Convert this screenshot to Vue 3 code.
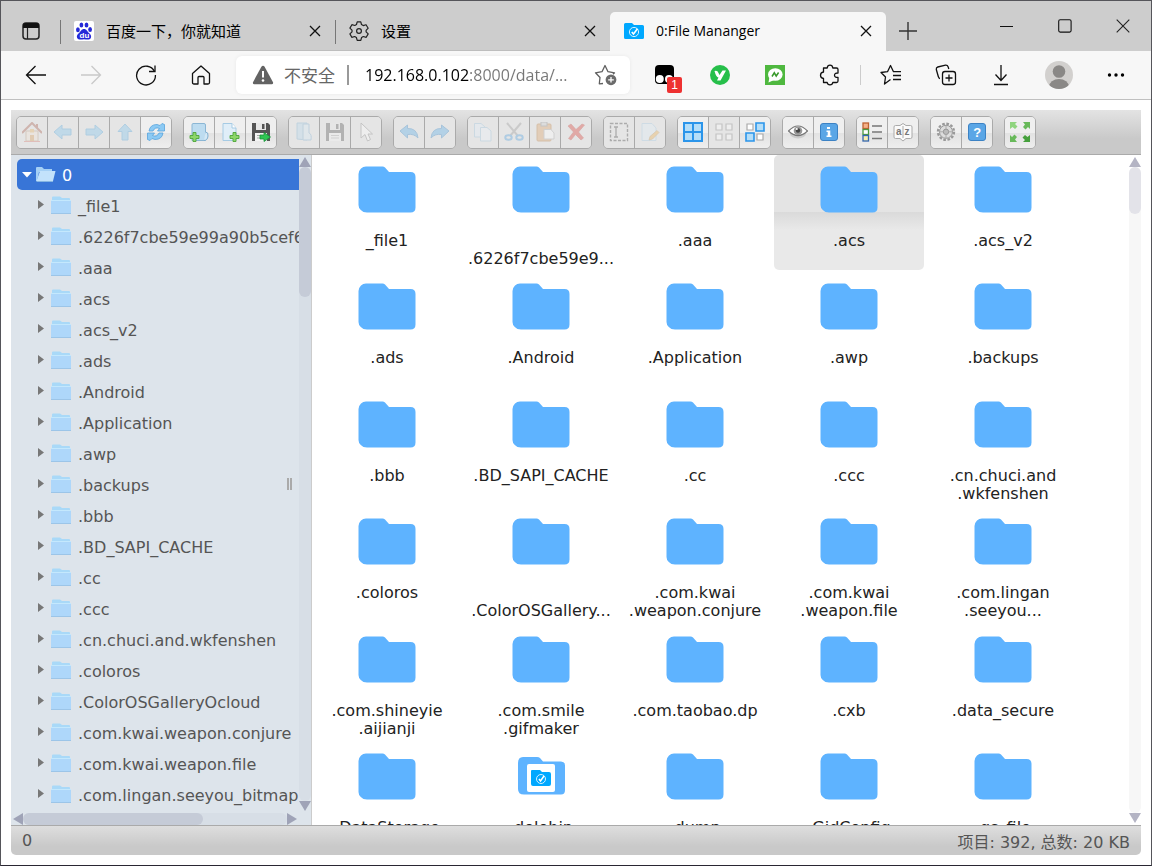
<template>
  <div class="window">
    <!-- Tab bar -->
    <header class="titlebar">
      <button class="tab-actions" aria-label="Tab actions">
        <svg width="20" height="20" viewBox="0 0 20 20" v-html="icons.tabs"></svg>
      </button>
      <div v-for="tab in tabs" :key="tab.title" class="tab" :class="{ active: tab.active }">
        <svg class="favicon" width="20" height="20" viewBox="0 0 20 20" v-html="icons[tab.icon]"></svg>
        <a href="#" class="tab-title">{{ tab.title }}</a>
        <button class="tab-close" aria-label="Close tab">
          <svg width="12" height="12" viewBox="0 0 12 12" v-html="icons.close"></svg>
        </button>
      </div>
      <button class="new-tab" aria-label="New tab">
        <svg width="18" height="18" viewBox="0 0 18 18"><path d="M9 0V18M0 9H18" stroke="#333" stroke-width="1.4" /></svg>
      </button>
      <div class="win-controls">
        <button aria-label="Minimize"><svg width="14" height="14" viewBox="0 0 14 14"><path d="M0 7.5H13" stroke="#111" /></svg></button>
        <button aria-label="Maximize"><svg width="14" height="14" viewBox="0 0 14 14"><rect x=".7" y=".7" width="12.4" height="12.4" rx="1.5" fill="none" stroke="#111" stroke-width="1.1" /></svg></button>
        <button aria-label="Close"><svg width="14" height="14" viewBox="0 0 14 14"><path d="M.7 .7L13.3 13.3M13.3 .7L.7 13.3" stroke="#222" stroke-width="1.1" /></svg></button>
      </div>
    </header>

    <!-- Navigation bar -->
    <div class="navbar">
      <button v-for="b in navButtons" :key="b" class="nav-btn" :aria-label="b" :disabled="b === 'forward'">
        <svg width="22" height="22" viewBox="0 0 22 22" v-html="icons[b]"></svg>
      </button>
      <div class="address">
        <svg width="22" height="20" viewBox="0 0 22 20">
          <path d="M11 .8Q12 .8 12.600 1.800L21 17.200Q21.600 19.200 19.600 19.200H2.400Q.4 19.200 1 17.200L9.400 1.800Q10 .8 11 .8Z" fill="#636363" />
          <path d="M11 6V12.500" stroke="#fff" stroke-width="2" /><circle cx="11" cy="15.500" r="1.300" fill="#fff" />
        </svg>
        <label for="url" class="insecure">不安全</label>
        <span class="bar"></span>
        <input id="url" v-model="url" type="text" class="url" />
        <button class="star" aria-label="Add to favorites">
          <svg width="24" height="22" viewBox="0 0 24 22">
            <path d="M9 19.500L5.300 19.800 6 13.500 1.500 8.800 8 7.700 11 1.500 14 7.700 20.500 8.800 19 10.300" fill="none" stroke="#5f5f5f" stroke-width="1.300" stroke-linejoin="round" />
            <circle cx="17" cy="15.800" r="5.400" fill="#6b6b6b" /><path d="M17 13V18.600M14.200 15.800H19.800" stroke="#fff" stroke-width="1.300" />
          </svg>
        </button>
      </div>
      <div class="extensions">
        <button v-for="b in extButtons" :key="b" class="nav-btn" :aria-label="b">
          <svg width="22" height="22" viewBox="0 0 22 22" v-html="icons[b]"></svg>
          <span v-if="b === 'monkey'" class="badge">1</span>
        </button>
      </div>
      <span class="divider"></span>
      <div class="extensions browser">
        <button v-for="b in browserButtons" :key="b" class="nav-btn" :aria-label="b">
          <svg width="22" height="22" viewBox="0 0 22 22" v-html="icons[b]"></svg>
        </button>
        <button class="nav-btn profile" aria-label="Profile">
          <svg width="28" height="28" viewBox="0 0 28 28">
            <defs><clipPath id="avatar"><circle cx="14" cy="14" r="14" /></clipPath></defs>
            <g clip-path="url(#avatar)"><rect width="28" height="28" fill="#d2d0ce" /><circle cx="14" cy="10.500" r="6.300" fill="#8a8886" /><ellipse cx="14" cy="26" rx="10" ry="8" fill="#8a8886" /></g>
          </svg>
        </button>
        <button class="nav-btn" aria-label="Settings and more">
          <svg width="20" height="20" viewBox="0 0 20 20"><circle cx="3.500" cy="10" r="1.700" /><circle cx="10" cy="10" r="1.700" /><circle cx="16.500" cy="10" r="1.700" /></svg>
        </button>
      </div>
    </div>

    <!-- File manager -->
    <main class="manager">
      <div class="toolbar">
        <div v-for="(set, i) in toolbar" :key="i" class="button-set">
          <button v-for="b in set" :key="b.name" class="tool" :aria-label="b.name" :disabled="b.off">
            <svg width="20" height="20" viewBox="0 0 20 20" v-html="icons[b.name]"></svg>
          </button>
        </div>
      </div>

      <div class="workzone">
        <nav class="tree">
          <div class="tree-view">
            <ul>
              <li>
                <a href="#" class="root">
                  <svg width="10" height="6" viewBox="0 0 10 6"><path d="M0 0H10L5 5.500Z" fill="#fff" /></svg>
                  <svg width="20" height="15" viewBox="0 0 20 15" v-html="icons.opened"></svg>
                  <span>0</span>
                </a>
              </li>
              <li v-for="dir in dirs" :key="dir">
                <a href="#" class="node">
                  <svg width="6" height="11" viewBox="0 0 6 11"><path d="M0 0L6 4.500L0 9Z" fill="#777" /></svg>
                  <svg width="20" height="19" viewBox="0 0 20 19" v-html="icons.dir"></svg>
                  <span>{{ dir }}</span>
                </a>
              </li>
            </ul>
            <div class="scroll vertical">
              <i class="up"></i><span class="track"><b class="nav-thumb"></b></span><i class="down"></i>
            </div>
          </div>
          <div class="scroll horizontal">
            <i class="left"></i><span class="track"><b class="h-thumb"></b></span><i class="right"></i>
          </div>
          <span class="grip"></span>
        </nav>

        <section class="cwd">
          <div class="files">
            <a v-for="file in files" :key="file" href="#" class="file" :class="{ hover: file === '.acs' }">
              <svg width="58" height="47" viewBox="0 0 58 47">
                <g v-if="file === '.dolohin'">
                  <path d="M11 4H25Q27 4 28 5L31 8.500H49Q53 8.500 53 12.500V37Q53 41.500 49 41.500H12Q6 41.500 6 36V10Q6 4 11 4Z" fill="#5eb3ff" />
                  <rect x="15" y="11" width="28" height="28" rx="2" fill="#fff" />
                  <path d="M20 17H28L30 19H37Q39 19 39 21V31Q39 33 37 33H21Q19 33 19 31V18Q19 17 20 17Z" fill="#00a8ff" />
                  <circle cx="29" cy="26" r="4.500" fill="none" stroke="#d5f0ff" /><path d="M27 26L28.500 28L32 23" fill="none" stroke="#fff" stroke-width="1.500" />
                </g>
                <path v-else d="M8 .5H24.500Q26 .5 27 1.500L31 6H52.500Q57.500 6 57.500 11V41.500Q57.500 46.500 52.500 46.500H9Q5 46.500 2.800 44Q.5 42 .5 39V8Q.5 5 3 2.500Q5 .5 8 .5Z" fill="#5eb3ff" />
              </svg>
              <span class="name">{{ labels[file] ?? file }}</span>
            </a>
          </div>
          <div class="scroll vertical light">
            <i class="up"></i><span class="track"><b class="cwd-thumb"></b></span><i class="down"></i>
          </div>
        </section>
      </div>

      <footer class="statusbar">
        <span>0</span>
        <span>项目: 392, 总数: 20 KB</span>
      </footer>
    </main>
  </div>
</template>

<script setup>
import { ref } from 'vue'

const url = ref('192.168.0.102:8000/data/...')

const tabs = [
  { title: '百度一下，你就知道', icon: 'baidu' },
  { title: '设置', icon: 'settings' },
  { title: '0:File Mananger', icon: 'manager', active: true },
]

const navButtons = ['back', 'forward', 'reload', 'homepage']
const extButtons = ['monkey', 'yext', 'chat', 'puzzle']
const browserButtons = ['favorites', 'collections', 'downloads']

const on = (name) => ({ name, off: false })
const off = (name) => ({ name, off: true })
const toolbar = [
  [off('home'), off('prev'), off('next'), off('up'), on('refresh')],
  [on('mkdir'), on('mkfile'), on('upload')],
  [off('open'), off('save'), off('cursor')],
  [off('undo'), off('redo')],
  [off('copy'), off('cut'), off('paste'), off('remove')],
  [off('rename'), off('edit')],
  [on('selectall'), off('selectnone'), on('invert')],
  [on('preview'), on('info')],
  [on('view'), on('sort')],
  [on('gear'), on('help')],
  [on('fullscreen')],
]

const dirs = [
  '_file1', '.6226f7cbe59e99a90b5cef6', '.aaa', '.acs', '.acs_v2', '.ads', '.Android',
  '.Application', '.awp', '.backups', '.bbb', '.BD_SAPI_CACHE', '.cc', '.ccc',
  '.cn.chuci.and.wkfenshen', '.coloros', '.ColorOSGalleryOcloud',
  '.com.kwai.weapon.conjure', '.com.kwai.weapon.file', '.com.lingan.seeyou_bitmap',
]

const files = [
  '_file1', '.6226f7cbe59e9', '.aaa', '.acs', '.acs_v2',
  '.ads', '.Android', '.Application', '.awp', '.backups',
  '.bbb', '.BD_SAPI_CACHE', '.cc', '.ccc', '.cn.chuci.and.wkfenshen',
  '.coloros', '.ColorOSGallery', '.com.kwai.weapon.conjure', '.com.kwai.weapon.file', '.com.lingan.seeyou',
  '.com.shineyie.aijianji', '.com.smile.gifmaker', '.com.taobao.dp', '.cxb', '.data_secure',
  '.DataStorage', '.dolohin', '.dump', '.GidConfig', '.gs_file',
]

// long names break at the dots, or are cut off on the second line
const labels = {
  '.6226f7cbe59e9': '\n.6226f7cbe59e9...',
  '.cn.chuci.and.wkfenshen': '.cn.chuci.and\n.wkfenshen',
  '.ColorOSGallery': '\n.ColorOSGallery...',
  '.com.kwai.weapon.conjure': '.com.kwai\n.weapon.conjure',
  '.com.kwai.weapon.file': '.com.kwai\n.weapon.file',
  '.com.lingan.seeyou': '.com.lingan\n.seeyou...',
  '.com.shineyie.aijianji': '.com.shineyie\n.aijianji',
  '.com.smile.gifmaker': '.com.smile\n.gifmaker',
}

const floppy = '<path d="M1 1H17L19 3V19H1Z" fill="#555"/><rect x="5" y="1" width="10" height="7" fill="#e8e8e8"/><rect x="11" y="2" width="2.500" height="5" fill="#555"/><rect x="4" y="11" width="12" height="8" fill="#f4f4f4"/><path d="M6 13.500H14M6 16H14" stroke="#aaa"/>'
const plus = '<path d="M13 10.500H16V13.500H19V16.500H16V19.500H13V16.500H10V13.500H13Z" fill="#8ed66a" stroke="#4ea63a" stroke-width=".9"/>'
const leftArrow = '<path d="M1 10L9 3V7H18V13H9V17Z" fill="#7cc3ee" stroke="#4fa3da"/>'

const icons = {
  tabs: '<rect x="2" y="2" width="16" height="16" rx="3" fill="none" stroke="#222" stroke-width="1.500"/><path d="M2 7V4.500Q2 2 4.500 2H15.500Q18 2 18 4.500V7Z" fill="#111"/><path d="M6.500 7V18" stroke="#222" stroke-width="1.200"/>',
  baidu: '<rect width="20" height="20" rx="2" fill="#fff"/><g fill="#2529d8"><ellipse cx="3.900" cy="8.800" rx="1.900" ry="2.500"/><ellipse cx="7.400" cy="4" rx="1.900" ry="2.600"/><ellipse cx="12.500" cy="4" rx="1.900" ry="2.600"/><ellipse cx="16.100" cy="8.600" rx="1.900" ry="2.500"/><path d="M10 8C12.500 8 13.300 10.500 15 12C17 13.800 17.600 15 16.800 17C16 18.900 13.500 18.600 10 18.300C6.500 18.600 4 18.900 3.200 17C2.400 15 3 13.800 5 12C6.700 10.500 7.500 8 10 8Z"/></g><text x="5.500" y="17.200" font-family="Liberation Sans, sans-serif" font-size="8" font-weight="bold" fill="#fff">du</text>',
  settings: '<path d="M8.200 .8H11.800L12.500 3.600L14.200 4.600L17 3.700L19.200 7.200L17.100 9.300V10.900L19.200 12.900L17.200 16.300L14.300 15.500L12.600 16.500L11.800 19.300H8.200L7.400 16.500L5.700 15.500L2.800 16.300L.9 12.900L3 10.900V9.200L.9 7.100L2.900 3.700L5.800 4.500L7.500 3.500Z" fill="none" stroke="#222" stroke-width="1.200" stroke-linejoin="round"/><circle cx="10" cy="10" r="2.400" fill="none" stroke="#222" stroke-width="1.200"/>',
  manager: '<path d="M1.500 2H8L10 4H18.500Q20 4 20 5.500V16.500Q20 18 18.500 18H1.500Q0 18 0 16.500V3.500Q0 2 1.500 2Z" fill="#00a8ff"/><circle cx="10" cy="11" r="4.600" fill="none" stroke="#d5f0ff"/><path d="M7.800 11L9.500 13L13.500 7.800" fill="none" stroke="#fff" stroke-width="1.600"/>',
  close: '<path d="M1 1L11 11M11 1L1 11" stroke="#111" stroke-width="1.300"/>',

  back: '<path d="M21 11H2M10.500 2L1.500 11L10.500 20" fill="none" stroke="#111" stroke-width="1.300"/>',
  forward: '<path d="M1 11H20M11.500 2L20.500 11L11.500 20" fill="none" stroke="#c9c9c9" stroke-width="1.300"/>',
  reload: '<path d="M19.500 7.500A9.400 9.400 0 1 0 20.400 11" fill="none" stroke="#111" stroke-width="1.300"/><path d="M20 1.500V7.500H14" fill="none" stroke="#111" stroke-width="1.300"/>',
  homepage: '<path d="M2.500 9.500L11 2L19.500 9.500V18.500Q19.500 20 18 20H14V13.500Q14 12.500 13 12.500H9Q8 12.500 8 13.500V20H4Q2.500 20 2.500 18.500Z" fill="none" stroke="#111" stroke-width="1.300" stroke-linejoin="round"/>',
  monkey: '<rect x="1" y="1" width="19" height="19" rx="4" fill="#000"/><circle cx="5.800" cy="15" r="4" fill="#fff"/><circle cx="15" cy="15" r="4" fill="#fff"/>',
  yext: '<circle cx="11" cy="11" r="10" fill="#26bf4a"/><path d="M5.500 7Q8.500 6 9.500 9L10.500 11L13.500 6.500H17L11.500 16.500H8L9.500 13.500Q7 13 5.500 7Z" fill="#fff"/>',
  chat: '<rect x="1" y="1" width="20" height="20" fill="#4fb83f"/><ellipse cx="11.300" cy="10.500" rx="7.300" ry="6.300" fill="#fff"/><path d="M5.500 13L4.500 18.500L10 16Z" fill="#fff"/><path d="M8 12.500L10.300 8.800L12.200 12L14.600 8.500" fill="none" stroke="#3a9a2c" stroke-width="1.500"/>',
  puzzle: '<path d="M4.500 4H8.200Q8.500 1.200 11 1.200Q13.500 1.200 13.800 4H17.500Q19 4 19 5.500V9Q15.500 8.800 15.500 11.200Q15.500 13.600 19 13.400V17Q19 18.500 17.500 18.500H13.800Q13.500 20.800 11 20.800Q8.500 20.800 8.200 18.500H4.500V14.500Q1.500 14 1.500 11.200Q1.500 8.500 4.500 8Z" fill="none" stroke="#111" stroke-width="1.300" stroke-linejoin="round"/>',
  favorites: '<path d="M10.500 15.500L4.500 20L5.500 13L1 8.500L7.500 7.700L10.500 1.500L13.500 7.700H21M13 11.500H21M13 15.500H21" fill="none" stroke="#111" stroke-width="1.300" stroke-linejoin="round"/>',
  collections: '<rect x="7.500" y="7.500" width="13" height="13" rx="2.500" fill="none" stroke="#111" stroke-width="1.300"/><path d="M14 10.500V17.500M10.500 14H17.500" stroke="#111" stroke-width="1.300"/><path d="M5 14.500Q3.800 14.500 3.300 12.500L1.300 5.500Q1 3.500 2.800 3L10.500 1.200Q12.500 1 13.200 3L13.800 5" fill="none" stroke="#111" stroke-width="1.300"/>',
  downloads: '<path d="M11 1V16M5.500 10.500L11 16.500L16.500 10.500M4 20.500H18" fill="none" stroke="#111" stroke-width="1.300"/>',

  home: '<rect x="4" y="9" width="12" height="10" fill="#efe3d4" stroke="#b89a7e"/><path d="M0 11L10 1L20 11" fill="none" stroke="#a55a48" stroke-width="2"/><rect x="8" y="13" width="4" height="6" fill="#d89a54"/><rect x="8" y="7" width="4" height="3.500" fill="#e9b25c"/><rect x="14" y="2" width="2" height="4" fill="#a55a48"/><path d="M2 19.500H18" stroke="#d7776b"/>',
  prev: leftArrow,
  next: `<g transform="translate(20 0) scale(-1 1)">${leftArrow}</g>`,
  up: '<path d="M10 2L17 9.500H13V18H7V9.500H3Z" fill="#7cc3ee" stroke="#4fa3da"/>',
  refresh: '<path d="M3 9Q4 2.500 11 2.500L14 3.500L16 1.500L18.500 2.500V9H11.500L13.500 6.500Q9 4.500 7 9Z" fill="#8ccaf4" stroke="#58a3dc" stroke-width=".8"/><path d="M17 11Q16 17.500 9 17.500L6 16.500L4 18.500L1.500 17.500V11H8.500L6.500 13.500Q11 15.500 13 11Z" fill="#8ccaf4" stroke="#58a3dc" stroke-width=".8"/>',
  mkdir: '<path d="M4 1.500H15Q16.500 1.500 16.500 3V18.500H3V3Q3 1.500 4 1.500Z" fill="#bddcf0" stroke="#8bb6d4"/><path d="M16.500 10Q19.500 10 19 14Q18.500 18.500 15 18.500" fill="#d4e8f5" stroke="#7faed0"/>' + `<g transform="translate(-9 0)">${plus}</g>`,
  mkfile: '<path d="M3 1.500H12L16 6V18.500H3Z" fill="#e0eef8" stroke="#a6cbe4"/><path d="M12 1.500V6H16" fill="#fff" stroke="#a6cbe4"/>' + plus,
  upload: floppy + '<path d="M13 10.500L19.500 15L13 19.500V17H9V13H13Z" fill="#2fc552" stroke="#169338" stroke-width=".8"/>',
  open: '<path d="M3 1H13V18L3 17Z" fill="#b5d8ee" stroke="#7faed0"/><path d="M9 2H15V11Q18 12 17 18H9Z" fill="#d4e8f5" stroke="#7faed0"/>',
  save: floppy,
  cursor: '<path d="M5 1V16L9 12.500L11.500 19L14.500 17.500L12 12H16.500Z" fill="#fff" stroke="#888"/>',
  undo: '<path d="M1 9L8.500 3V6.500Q18 6 19 16Q15 11.500 8.500 12.500V16Z" fill="#58aee8" stroke="#3585c6"/>',
  redo: '<path d="M19 9L11.500 3V6.500Q2 6 1 16Q5 11.500 11.500 12.500V16Z" fill="#58aee8" stroke="#3585c6"/>',
  copy: '<path d="M1.500 1.500H8L12 5V15H1.500Z" fill="#e3f0f9" stroke="#9cc3de"/><path d="M7.500 5.500H14L18 9V19H7.500Z" fill="#eef6fc" stroke="#9cc3de"/>',
  cut: '<path d="M3 1L14 14M17 1L6 14" stroke="#999" stroke-width="2"/><ellipse cx="4.500" cy="15.500" rx="3.200" ry="2.300" fill="none" stroke="#4a9ede" stroke-width="2"/><ellipse cx="15.500" cy="15.500" rx="3.200" ry="2.300" fill="none" stroke="#4a9ede" stroke-width="2"/>',
  paste: '<rect x="2" y="2" width="14" height="17" rx="1" fill="#dda266" stroke="#b87a3c"/><rect x="6" y="0" width="6" height="4" fill="#ccc" stroke="#888"/><path d="M9 7.500H16L19 11V17H9Z" fill="#fff" stroke="#aaa"/>',
  remove: '<path d="M2 4L5 2L10 7.500L16 2L18.500 3L12.500 10L17.500 16L15 18L9.500 12.500L5 18L2.500 16.500L7.500 10Z" fill="#da3d33" stroke="#b92d25" stroke-width=".6"/>',
  rename: '<rect x="1.500" y="1.500" width="17" height="17" fill="none" stroke="#444" stroke-width="1.400" stroke-dasharray="3 1.500"/><path d="M5 5H9M7 5V15M5 15H9" stroke="#444" stroke-width="1.300"/>',
  edit: '<path d="M2 1.500H12L16 6V18.500H2Z" fill="#e0eef8" stroke="#a6cbe4"/><path d="M9 18L10 14.500L17 8.500L19 10.500L12.500 17Z" fill="#efb04e" stroke="#b98c46" stroke-width=".7"/>',
  selectall: '<rect width="20" height="20" fill="#2b95ea"/><path d="M2 2H9V9H2ZM11 2H18V9H11ZM2 11H9V18H2ZM11 11H18V18H11Z" fill="#b5def8"/>',
  selectnone: '<path d="M2 2H8V8H2ZM12 2H18V8H12ZM2 12H8V18H2ZM12 12H18V18H12Z" fill="#fff" stroke="#888" stroke-width="1.200"/>',
  invert: '<path d="M2 2H8V8H2ZM12 12H18V18H12Z" fill="#fff" stroke="#aaa" stroke-width="1.200"/><path d="M11 1H19V9H11ZM1 11H9V19H1Z" fill="#b5def8" stroke="#2b95ea" stroke-width="1.600"/>',
  preview: '<ellipse cx="10" cy="11.500" rx="8" ry="5" fill="#ccc"/><path d="M.5 9Q10 -1 19.500 9Q10 18 .5 9Z" fill="#fff" stroke="#777" stroke-width="1.200"/><circle cx="10" cy="8.800" r="4.300" fill="#999"/><circle cx="10" cy="8.500" r="2.200" fill="#444"/><circle cx="8.800" cy="7" r="1" fill="#fff"/>',
  info: '<rect x="1.500" y="1.500" width="17" height="17" rx="2.500" fill="#5aa6e6" stroke="#3c82c4"/><path d="M8 5H11V7H8ZM7.500 8.500H11.300V13.500H12.500V15H7.500V13.500H8.700V10H7.500Z" fill="#fff"/>',
  view: '<rect x="1" y="1" width="5.500" height="5.500" fill="#f5b188" stroke="#bd6132" stroke-width="1.300"/><rect x="1" y="7.500" width="5.500" height="5" fill="#fff" stroke="#4c9a40" stroke-width="1.300"/><rect x="1" y="13.500" width="5.500" height="5.500" fill="#f8eeb0" stroke="#3668b0" stroke-width="1.300"/><path d="M10 4H20M10 10H20M10 16.500H20" stroke="#777" stroke-width="1.300"/>',
  sort: '<path d="M2.500 3.500H7L10 1.500L13 3.500H17.500Q19 3.500 19 5V15Q19 16.500 17.500 16.500H13L10 19L7 16.500H2.500Q1 16.500 1 15V5Q1 3.500 2.500 3.500Z" fill="#fafafa" stroke="#aaa"/><path d="M10 4V16" stroke="#aaa"/><text x="3" y="13" font-family="Liberation Sans, sans-serif" font-size="10" font-weight="bold" fill="#777">a</text><text x="11.500" y="13" font-family="Liberation Sans, sans-serif" font-size="10" font-weight="bold" fill="#777">z</text>',
  gear: '<circle cx="10" cy="9.800" r="8" fill="none" stroke="#999" stroke-width="2.400" stroke-dasharray="2.600 1.600"/><circle cx="10" cy="9.800" r="6.500" fill="#ddd" stroke="#999"/><circle cx="10" cy="9.800" r="2.700" fill="#bbb" stroke="#999"/><path d="M10 3.500V7M10 12.500V16M3.800 9.800H7M13 9.800H16.200" stroke="#aaa"/>',
  help: '<rect x="1.500" y="1.500" width="17" height="17" rx="2.500" fill="#5aa6e6" stroke="#3c82c4"/><text x="6.200" y="14.700" font-family="Liberation Sans, sans-serif" font-size="13" font-weight="bold" fill="#fff">?</text>',
  fullscreen: '<path d="M0 0H7L5 2L7.500 4.500L5 7L2.500 5L0 7Z" fill="#8fd47e"/><path d="M20 0V7L18 5L15.500 7.500L13 5L15 2.500L13 0Z" fill="#68b95a"/><path d="M0 20V13L2 15L4.500 12.500L7 15L5 17.500L7 20Z" fill="#68b95a"/><path d="M20 20H13L15 18L12.500 15.500L15 13L17.500 15L20 13Z" fill="#45a03c"/>',
  opened: '<path d="M0 1Q0 0 1 0H6L8 2H16V5H3L1 14H0Z" fill="#a5d0f5"/><path d="M4 4H19.500L17 14H.5Z" fill="#c3e2fb"/><path d="M.5 14.500H17" stroke="#86b6e2"/>',
  dir: '<path d="M1 1.500Q1 .5 2 .5H9L11 2H18Q19 2 19 3V6H1Z" fill="#a9d9f8"/><rect x="0" y="4" width="20" height="14" fill="#aed7fa"/><path d="M0 4.500H20" stroke="#c4e8fd"/><path d="M0 17.500H20" stroke="#9cc5e8"/>',
}
</script>

<style>
body {
  margin: 0;
  overflow: hidden;
}
</style>

<style scoped>
.window {
  box-sizing: border-box;
  height: 100vh;
  display: flex;
  flex-direction: column;
  border: 1px solid #55555a;
  border-bottom-color: #2a2733;
  background: #fff;
  font-family: "Open Sans", "Noto Sans CJK SC", sans-serif;
}

button {
  display: flex;
  align-items: center;
  justify-content: center;
  padding: 0;
  border: 0;
  background: none;
}

a {
  color: inherit;
  text-decoration: none;
}

svg {
  display: block;
  flex: none;
}

/* Tab bar */
.titlebar {
  display: flex;
  align-items: flex-end;
  flex: none;
  height: 50px;
  background: #cdcdcd;
}

.tab-actions {
  flex: none;
  width: 59px;
  height: 40px;
}

.tab {
  box-sizing: border-box;
  display: flex;
  align-items: center;
  flex: 0 1 275px;
  min-width: 0;
  height: 39px;
  padding: 0 14px;
  background: linear-gradient(#777, #777) 0 8px / 1px 24px no-repeat;
  border-bottom: 1px solid #bdbdbd;
  font-size: 15px;
}

.tab.active {
  flex-basis: 276px;
  border-radius: 5px 5px 0 0;
  border-bottom-color: #f7f7f7;
  background: #f7f7f7;
}

.favicon {
  margin-right: 12px;
}

.tab-title {
  flex: 1;
  padding-bottom: 2px;
  overflow: hidden;
  white-space: nowrap;
}

.tab.active .tab-title {
  font-size: 14px;
}

.new-tab {
  flex: none;
  width: 44px;
  height: 40px;
}

.win-controls {
  display: flex;
  align-self: flex-start;
  gap: 44px;
  margin-left: auto;
  padding: 18px 21px 0 0;
}

/* Navigation bar */
.navbar {
  display: flex;
  align-items: center;
  flex: none;
  height: 48px;
  padding: 0 17px;
  gap: 19px;
  background: #f7f7f7;
  border-bottom: 1px solid #c0c0c0;
}

.nav-btn {
  position: relative;
  flex: none;
  width: 36px;
  height: 36px;
}

.address {
  display: flex;
  align-items: center;
  flex: 1;
  min-width: 0;
  height: 38px;
  margin: 0 -2px;
  padding: 0 12px 0 16px;
  border-radius: 6px;
  background: #fff;
  box-shadow: 0 0 4px rgba(0, 0, 0, 0.06);
}

.insecure {
  margin-left: 10px;
  padding-bottom: 2px;
  font-size: 17px;
  color: #666;
  white-space: nowrap;
}

.bar {
  width: 2px;
  height: 20px;
  margin: 0 16px 0 12px;
  background: #999;
}

.url {
  flex: 1;
  min-width: 0;
  padding: 0;
  border: 0;
  outline: none;
  font: 16px "Open Sans", sans-serif;
  background: linear-gradient(to right, #000 105px, #767676 105px);
  -webkit-background-clip: text;
  background-clip: text;
  color: transparent;
}

.star {
  margin-left: 12px;
}

.extensions {
  display: flex;
  gap: 19px;
}

.browser {
  margin-left: -7px;
}

.profile {
  margin: 0 2px 0 3px;
}

.divider {
  width: 1px;
  height: 20px;
  margin-left: -7px;
  background: #ccc;
}

.badge {
  position: absolute;
  right: 1px;
  bottom: 0;
  width: 15px;
  height: 16px;
  border-radius: 2px;
  background: #ee3131;
  color: #fff;
  font-size: 12px;
  line-height: 16px;
}

/* File manager */
.manager {
  display: flex;
  flex-direction: column;
  flex: 1;
  min-height: 0;
  margin: 10px;
  font-family: "DejaVu Sans", "Noto Sans CJK SC", sans-serif;
  font-size: 16px;
}

.toolbar {
  display: flex;
  align-items: center;
  flex: none;
  gap: 11px;
  height: 44px;
  padding: 0 5px;
  background: linear-gradient(#e3e3e3, #c9c9c9 65%, #c9c9c9);
  border-bottom: 1px solid #aaa;
}

.button-set {
  display: flex;
  border: 1px solid #aaa;
  border-radius: 5px;
  overflow: hidden;
}

.tool {
  box-sizing: content-box;
  width: 30px;
  height: 31px;
  background: linear-gradient(#efefef 50%, #e2e2e2 50%, #eee);
}

.tool + .tool {
  border-left: 1px solid #aaa;
}

.tool:disabled {
  background: #e5e5e5;
}

.tool:disabled svg {
  opacity: 0.35;
}

.workzone {
  display: flex;
  flex: 1;
  min-height: 0;
}

.tree {
  position: relative;
  display: flex;
  flex-direction: column;
  flex: none;
  width: 300px;
  background: #dde4eb;
  border-right: 1px solid #ccc;
  color: #555;
}

.tree-view {
  display: flex;
  flex: 1;
  min-height: 0;
}

.tree ul {
  flex: 1;
  min-width: 0;
  margin: 0;
  padding: 4px 0 0 6px;
  overflow: hidden;
  list-style: none;
}

.root,
.node {
  display: flex;
  align-items: center;
  height: 31px;
  white-space: nowrap;
}

.root span,
.node span {
  padding-top: 2px;
}

.root {
  gap: 6px;
  padding-left: 5px;
  border-radius: 5px 0 0 5px;
  background: #3875d7;
  color: #fff;
}

.root svg + svg {
  margin-left: -2px;
}

.node {
  gap: 7px;
  padding-left: 21px;
}

/* Scrollbars */
.scroll {
  display: flex;
  align-items: center;
  flex: none;
}

.scroll i {
  border: 6px solid transparent;
}

.scroll .track {
  flex: 1;
  border-radius: 6px;
  background: #d7dee6;
}

.scroll b {
  display: block;
  border-radius: 6px;
  background: #c5cbd7;
}

.vertical {
  flex-direction: column;
  width: 12px;
  padding-top: 2px;
}

.vertical .track {
  width: 12px;
}

.scroll .up {
  border-top: 0;
  border-bottom: 10px solid #9fa3b7;
}

.scroll .down {
  border-bottom: 0;
  border-top: 10px solid #9fa3b7;
}

.horizontal {
  height: 12px;
  padding: 2px 14px 0 2px;
}

.horizontal .track {
  height: 12px;
}

.scroll .left {
  border-left: 0;
  border-right: 10px solid #9fa3b7;
}

.scroll .right {
  border-right: 0;
  border-left: 10px solid #9fa3b7;
}

.nav-thumb {
  height: 130px;
}

.h-thumb {
  width: 68%;
  height: 12px;
}

.cwd-thumb {
  height: 47px;
}

.light {
  padding-bottom: 2px;
}

.light .up {
  border-bottom-color: #b4b4c4;
}

.light .down {
  border-top-color: #b4b4c4;
}

.light .track {
  background: #f7f7f7;
}

.light b {
  background: #e3e3e9;
}

.grip {
  position: absolute;
  top: 323px;
  right: 19px;
  width: 1px;
  height: 12px;
  border: solid #aaa;
  border-width: 0 2px;
}

/* File list */
.cwd {
  display: flex;
  flex: 1;
  min-width: 0;
}

.files {
  flex: 1;
  display: grid;
  grid-template-columns: repeat(auto-fill, 150px);
  grid-auto-rows: 117px 118px;
  column-gap: 4px;
  overflow: hidden;
  color: #222;
}

.file {
  display: flex;
  flex-direction: column;
  align-items: center;
  align-self: start;
  box-sizing: border-box;
  height: 115px;
  padding-top: 11px;
  border-radius: 5px;
}

.file.hover {
  background: linear-gradient(#e4e4e4 57px, #dadada 57px, #e9e9e9 75px);
}

.name {
  margin-top: 19px;
  line-height: 18px;
  text-align: center;
  white-space: pre;
}

/* Status bar */
.statusbar {
  display: flex;
  align-items: center;
  justify-content: space-between;
  flex: none;
  height: 29px;
  padding: 0 11px;
  border-top: 1px solid #aaa;
  border-radius: 0 0 5px 5px;
  background: linear-gradient(#dedede, #c9c9c9 70%);
  color: #555;
}
</style>
